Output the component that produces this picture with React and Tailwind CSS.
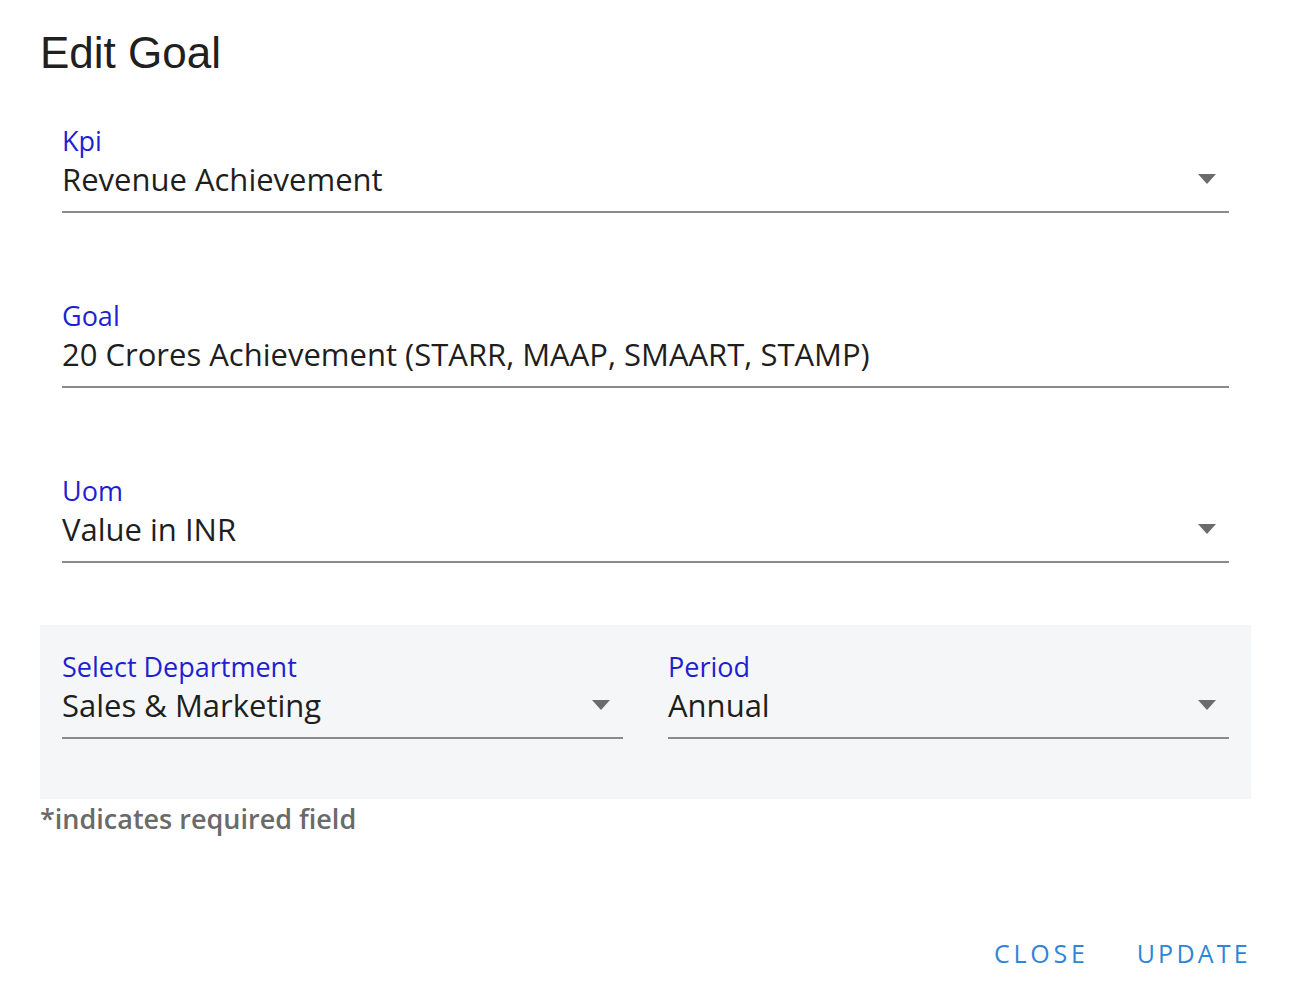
const font = { fontFamily: '"Open Sans", "Noto Sans", sans-serif' };

function Caret() {
  return (
    <svg width="18" height="10" viewBox="0 0 18 10" className="shrink-0">
      <path d="M0 0 L18 0 L9 10 Z" fill="#6b6b6b" />
    </svg>
  );
}

function Field({ label, value, select }) {
  return (
    <div className="flex flex-col">
      <div className="text-[27px] leading-[30px] font-medium text-[#1f1fd1]">{label}</div>
      <div className="flex items-center justify-between h-[57px] pb-[9px] border-b-2 border-[#8a8a8a] pr-[13px]">
        <span className="text-[31px] leading-[40px] text-[#1e1e1e]">{value}</span>
        {select && <Caret />}
      </div>
    </div>
  );
}

export default function App() {
  return (
    <div className="w-[1292px] h-[1000px] bg-white" style={font}>
      <div className="px-[40px] pt-[26px]">
        <h1
          className="text-[44px] leading-[54px] text-[#202020]"
          style={{ fontFamily: '"Liberation Sans", Arial, sans-serif' }}
        >
          Edit Goal
        </h1>
        <div className="w-[1211px]">
          <div className="px-[22px] pt-[46px] flex flex-col gap-[88px]">
            <Field label="Kpi" value="Revenue Achievement" select />
            <Field label="Goal" value="20 Crores Achievement (STARR, MAAP, SMAART, STAMP)" />
            <Field label="Uom" value="Value in INR" select />
          </div>
          <div className="mt-[62px] bg-[#f5f6f7] px-[22px] pt-[27px] pb-[60px] grid grid-cols-2 gap-[45px]">
            <Field label="Select Department" value="Sales & Marketing" select />
            <Field label="Period" value="Annual" select />
          </div>
          <div className="pt-[4px] text-[27px] leading-[32px] font-semibold text-[#6a6a6a]">
            *indicates required field
          </div>
          <div className="flex justify-end gap-[48px] pt-[102px]">
            <button className="text-[25px] leading-[32px] tracking-[0.15em] font-medium text-[#2f86d8]">CLOSE</button>
            <button className="text-[25px] leading-[32px] tracking-[0.13em] font-medium text-[#2f86d8]">UPDATE</button>
          </div>
        </div>
      </div>
    </div>
  );
}
